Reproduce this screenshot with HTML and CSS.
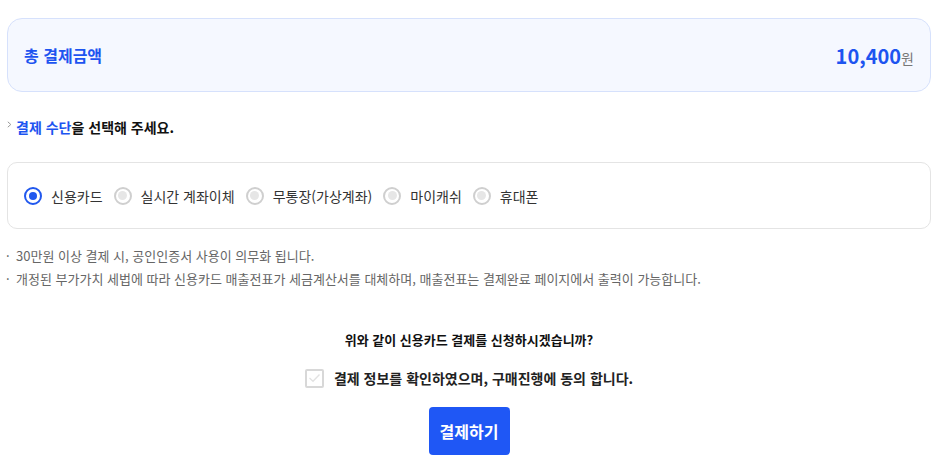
FILE: index.html
```html
<!DOCTYPE html>
<html lang="ko">
<head>
    <meta charset="UTF-8">
    <meta name="viewport" content="width=device-width, initial-scale=1.0">
    <title>결제하기</title>
    <link rel="stylesheet" href="styles.css">
</head>
<body>
    <div class="container">
        <div class="total-box">
            <span class="total-label">총 결제금액</span>
            <span class="total-price"><strong>10,400</strong><em>원</em></span>
        </div>

        <h2 class="section-title">
            <svg class="chevron" width="5" height="7" viewBox="0 0 5 7"><path d="M0.8 0.8 L3.8 3.5 L0.8 6.2" fill="none" stroke="#999" stroke-width="1"/></svg>
            <span class="point">결제 수단</span>을 선택해 주세요.
        </h2>

        <div class="method-box">
            <label class="radio checked"><span class="dot"></span>신용카드</label>
            <label class="radio"><span class="dot"></span>실시간 계좌이체</label>
            <label class="radio"><span class="dot"></span>무통장(가상계좌)</label>
            <label class="radio"><span class="dot"></span>마이캐쉬</label>
            <label class="radio"><span class="dot"></span>휴대폰</label>
        </div>

        <ul class="notes">
            <li>30만원 이상 결제 시, 공인인증서 사용이 의무화 됩니다.</li>
            <li>개정된 부가가치 세법에 따라 신용카드 매출전표가 세금계산서를 대체하며, 매출전표는 결제완료 페이지에서 출력이 가능합니다.</li>
        </ul>

        <div class="confirm">
            <p class="question">위와 같이 신용카드 결제를 신청하시겠습니까?</p>
            <label class="agree">
                <span class="check">
                    <svg width="13" height="10" viewBox="0 0 13 10"><path d="M1.5 5 L5 8.2 L11.5 1.5" fill="none" stroke="#e2e2e2" stroke-width="1.4"/></svg>
                </span>
                결제 정보를 확인하였으며, 구매진행에 동의 합니다.
            </label>
            <button class="pay-button">결제하기</button>
        </div>
    </div>
</body>
</html>
```

FILE: styles.css
```css
* {
    box-sizing: border-box;
    margin: 0;
    padding: 0;
}

body {
    font-family: "Noto Sans CJK KR", "Noto Sans", sans-serif;
    background-color: #fff;
    color: #222;
}

.container {
    width: 924px;
    margin-left: 7px;
    padding-top: 18px;
}

.total-box {
    display: flex;
    justify-content: space-between;
    align-items: center;
    height: 74px;
    padding: 0 16px;
    background-color: #f5f8ff;
    border: 1px solid #d6e1fc;
    border-radius: 15px;
}

.total-label {
    font-size: 16px;
    font-weight: bold;
    color: #1d54f0;
}

.total-price strong {
    font-size: 20px;
    font-weight: bold;
    color: #1d54f0;
}

.total-price em {
    font-style: normal;
    font-size: 14px;
    color: #777;
}

.section-title {
    display: flex;
    align-items: center;
    margin-top: 24px;
    font-size: 14px;
    font-weight: bold;
    line-height: 22px;
    color: #111;
}

.chevron {
    margin-right: 4px;
    margin-top: -6px;
}

.section-title .point {
    color: #1d54f0;
}

.method-box {
    display: flex;
    align-items: center;
    gap: 11px;
    height: 67px;
    margin-top: 24px;
    padding: 0 16px;
    border: 1px solid #e4e4e4;
    border-radius: 10px;
}

.radio {
    display: flex;
    align-items: center;
    gap: 9px;
    font-size: 14px;
    color: #333;
}

.dot {
    display: flex;
    justify-content: center;
    align-items: center;
    width: 18px;
    height: 18px;
    border: 2px solid #cfcfcf;
    border-radius: 50%;
}

.dot::after {
    content: "";
    width: 9px;
    height: 9px;
    border-radius: 50%;
    background-color: #e6e6e6;
}

.radio.checked .dot {
    border-color: #2158ee;
}

.radio.checked .dot::after {
    width: 8px;
    height: 8px;
    background-color: #2158ee;
}

.notes {
    list-style: none;
    margin-top: 15px;
}

.notes li {
    position: relative;
    padding-left: 9px;
    font-size: 13px;
    line-height: 23px;
    color: #666;
}

.notes li::before {
    content: "·";
    position: absolute;
    left: -1px;
    top: 0;
    color: #555;
}

.confirm {
    display: flex;
    flex-direction: column;
    align-items: center;
    margin-top: 40px;
}

.question {
    font-size: 13px;
    font-weight: bold;
    line-height: 20px;
    color: #111;
}

.agree {
    display: flex;
    align-items: center;
    gap: 10px;
    margin-top: 18px;
    font-size: 14px;
    font-weight: bold;
    color: #222;
}

.check {
    display: flex;
    justify-content: center;
    align-items: center;
    width: 19px;
    height: 19px;
    border: 2px solid #d8d8d8;
    border-radius: 2px;
}

.pay-button {
    margin-top: 19px;
    width: 81px;
    height: 48px;
    border: none;
    border-radius: 4px;
    background-color: #1f57f5;
    color: #fff;
    font-family: inherit;
    font-size: 16px;
    font-weight: bold;
    cursor: pointer;
}
```
